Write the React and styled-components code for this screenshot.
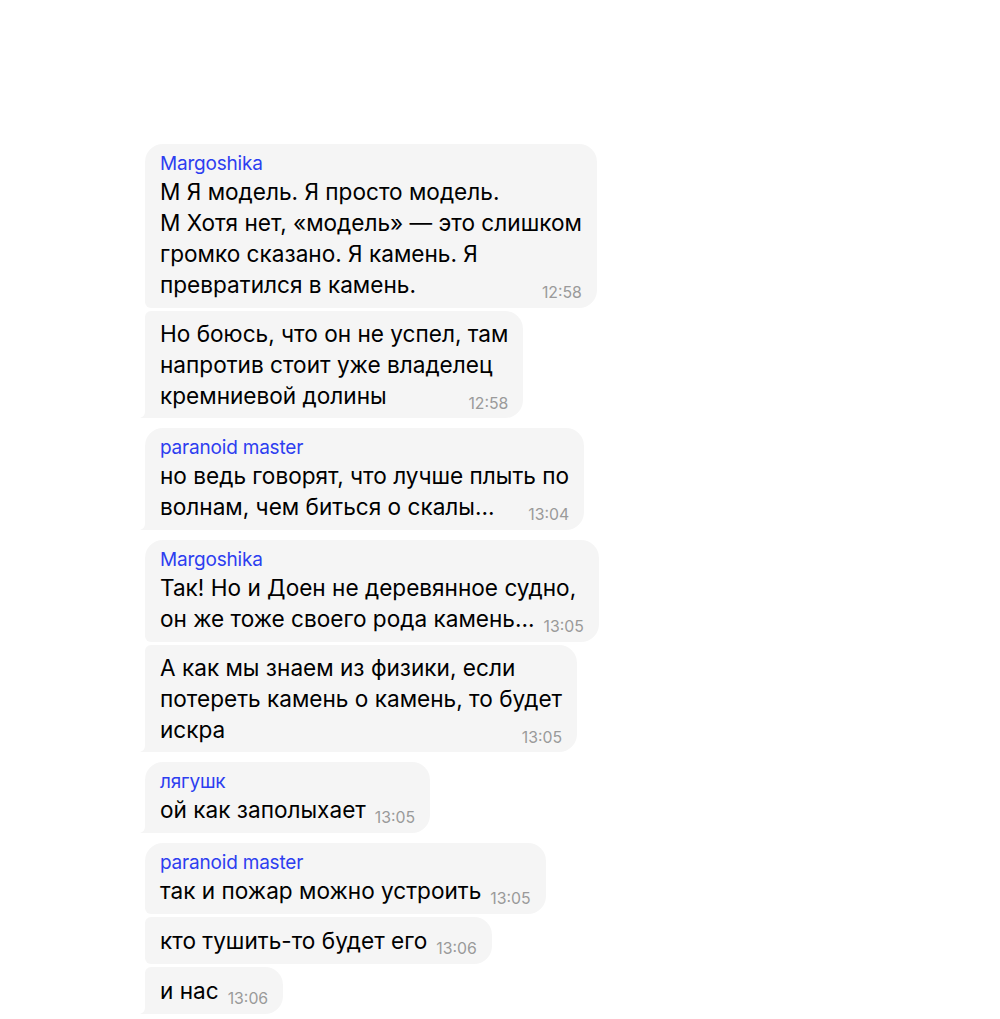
import React from "react";
import styled, { createGlobalStyle, css } from "styled-components";

const Global = createGlobalStyle`
  html, body { margin: 0; padding: 0; background: #ffffff; }
  body { font-family: Inter, "Liberation Sans", Arial, sans-serif; }
`;

const Page = styled.div`
  width: 1000px;
  min-height: 1019px;
  box-sizing: border-box;
  padding: 144px 0 0 145px;
`;

const Feed = styled.div`
  display: flex;
  flex-direction: column;
  align-items: flex-start;
  gap: 10px;
`;

const Group = styled.div`
  display: flex;
  flex-direction: column;
  align-items: flex-start;
  gap: 3px;
`;

const BIG = 18;
const SMALL = 6;

const Bubble = styled.div`
  position: relative;
  background: #f5f5f5;
  box-sizing: border-box;
  padding: ${({ $compact }) => ($compact ? "7px 15px 7px 15px" : "8px 15px 8px 15px")};
  color: #000;
  ${({ $first, $last }) => css`
    border-radius: ${BIG}px;
    border-top-left-radius: ${$first ? BIG : SMALL}px;
    border-bottom-left-radius: ${$last ? 0 : SMALL}px;
  `}
`;

const Tail = styled.svg`
  position: absolute;
  left: -6px;
  bottom: 0;
  width: 16px;
  height: 16px;
  display: block;
`;

const Name = styled.div`
  font-size: 19px;
  line-height: 24px;
  color: #2d3ef0;
  letter-spacing: -0.2px;
`;

const Text = styled.div`
  font-size: 22.6px;
  line-height: 31px;
  white-space: nowrap;
`;

const LastLine = styled.div`
  display: flex;
  align-items: flex-end;
  justify-content: space-between;
  gap: 9px;
`;

const Time = styled.span`
  font-size: 15.8px;
  line-height: 20px;
  color: #9a9a9a;
  margin-bottom: -3px;
  flex: none;
`;

const groups = [
  [
    {
      name: "Margoshika",
      lines: [
        "М Я модель. Я просто модель.",
        "М Хотя нет, «модель» — это слишком",
        "громко сказано. Я камень. Я",
        "превратился в камень.",
      ],
      time: "12:58",
    },
    {
      lines: [
        "Но боюсь, что он не успел, там",
        "напротив стоит уже владелец",
        "кремниевой долины",
      ],
      time: "12:58",
    },
  ],
  [
    {
      name: "paranoid master",
      lines: ["но ведь говорят, что лучше плыть по", "волнам, чем биться о скалы…"],
      time: "13:04",
    },
  ],
  [
    {
      name: "Margoshika",
      lines: ["Так! Но и Доен не деревянное судно,", "он же тоже своего рода камень…"],
      time: "13:05",
    },
    {
      lines: ["А как мы знаем из физики, если", "потереть камень о камень, то будет", "искра"],
      time: "13:05",
    },
  ],
  [{ name: "лягушк", lines: ["ой как заполыхает"], time: "13:05" }],
  [
    { name: "paranoid master", lines: ["так и пожар можно устроить"], time: "13:05" },
    { lines: ["кто тушить-то будет его"], time: "13:06" },
    { lines: ["и нас"], time: "13:06" },
  ],
];

function Message({ msg, first, last }) {
  const head = msg.lines.slice(0, -1);
  const tail = msg.lines[msg.lines.length - 1];
  const compact = !msg.name && msg.lines.length > 1;
  return (
    <Bubble $first={first} $last={last} $compact={compact}>
      {msg.name && <Name>{msg.name}</Name>}
      <Text>
        {head.map((l, i) => (
          <div key={i}>{l}</div>
        ))}
        <LastLine>
          <span>{tail}</span>
          <Time>{msg.time}</Time>
        </LastLine>
      </Text>
      {last && (
        <Tail viewBox="0 0 16 16">
          <path d="M16 0 V16 H1 C4 15 6 13 6 9 V0 Z" fill="#f5f5f5" />
        </Tail>
      )}
    </Bubble>
  );
}

export default function App() {
  return (
    <>
      <Global />
      <Page>
        <Feed>
          {groups.map((g, gi) => (
            <Group key={gi}>
              {g.map((m, mi) => (
                <Message key={mi} msg={m} first={mi === 0} last={mi === g.length - 1} />
              ))}
            </Group>
          ))}
        </Feed>
      </Page>
    </>
  );
}
